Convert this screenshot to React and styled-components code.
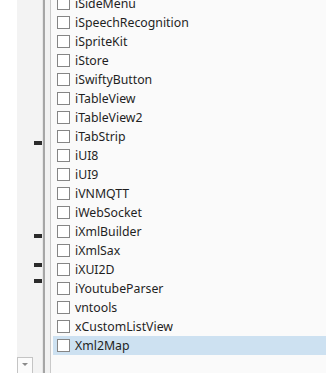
import React from "react";
import styled, { createGlobalStyle } from "styled-components";

const items = [
  "iSideMenu",
  "iSpeechRecognition",
  "iSpriteKit",
  "iStore",
  "iSwiftyButton",
  "iTableView",
  "iTableView2",
  "iTabStrip",
  "iUI8",
  "iUI9",
  "iVNMQTT",
  "iWebSocket",
  "iXmlBuilder",
  "iXmlSax",
  "iXUI2D",
  "iYoutubeParser",
  "vntools",
  "xCustomListView",
  "Xml2Map",
];

// marker positions on the overview strip
const marks = [141, 234, 263, 279];

const GlobalStyle = createGlobalStyle`
  html, body {
    margin: 0;
    padding: 0;
    background: #fafafa;
  }
  body {
    font-family: "Segoe UI", "Noto Sans", "Open Sans", sans-serif;
  }
`;

const Wrapper = styled.div`
  display: flex;
  height: 373px;
  overflow: hidden;
`;

const Blank = styled.div`
  width: 17px;
  background: #ffffff;
`;

const Ruler = styled.div`
  width: 17px;
  background: #f3f3f3;
  display: flex;
  flex-direction: column;
  justify-content: flex-end;
`;

const DropButton = styled.div`
  width: 16px;
  height: 16px;
  box-sizing: border-box;
  border: 1px solid #c4c4c4;
  border-bottom: none;
  background: #fbfbfb;
  display: flex;
  justify-content: center;
  padding-top: 5px;
`;

const Arrow = styled.div`
  width: 0;
  height: 0;
  border-left: 3px solid transparent;
  border-right: 3px solid transparent;
  border-top: 3px solid #8a8a8a;
`;

const Track = styled.div`
  position: relative;
  width: 8px;
  background: #f3f3f3;
`;

const Mark = styled.div`
  position: absolute;
  left: 0;
  width: 8px;
  height: 4px;
  background: #2b2b2b;
`;

const Divider = styled.div`
  width: 9px;
  box-sizing: border-box;
  border-left: 1px solid #e6e6e6;
  display: flex;
`;

const Groove = styled.div`
  width: 2px;
  background: #a5a5a5;
`;

const Gap = styled.div`
  flex: 1;
  background: #f1f1f1;
  border-right: 1px solid #c9c9c9;
`;

const List = styled.div`
  flex: 1;
  background: #fafafa;
  padding-left: 2px;
  margin-top: -6px;
`;

const Row = styled.div`
  display: flex;
  align-items: center;
  height: 19px;
  padding-left: 4px;
  gap: 5px;
  background: ${(p) => (p.$selected ? "#cde1f1" : "transparent")};
`;

const Box = styled.div`
  width: 13px;
  height: 13px;
  box-sizing: border-box;
  border: 1px solid #858585;
  background: #ffffff;
  flex-shrink: 0;
`;

const Label = styled.span`
  font-size: 12.3px;
  color: #1f1f1f;
  white-space: nowrap;
  line-height: 19px;
`;

const App = () => {
  return (
    <Wrapper>
      <GlobalStyle />
      <Blank />
      <Ruler>
        <DropButton>
          <Arrow />
        </DropButton>
      </Ruler>
      <Track>
        {marks.map((top) => (
          <Mark key={top} style={{ top }} />
        ))}
      </Track>
      <Divider>
        <Groove />
        <Gap />
      </Divider>
      <List>
        {items.map((name, i) => (
          <Row key={name} $selected={i === items.length - 1}>
            <Box />
            <Label>{name}</Label>
          </Row>
        ))}
      </List>
    </Wrapper>
  );
};

export default App;
